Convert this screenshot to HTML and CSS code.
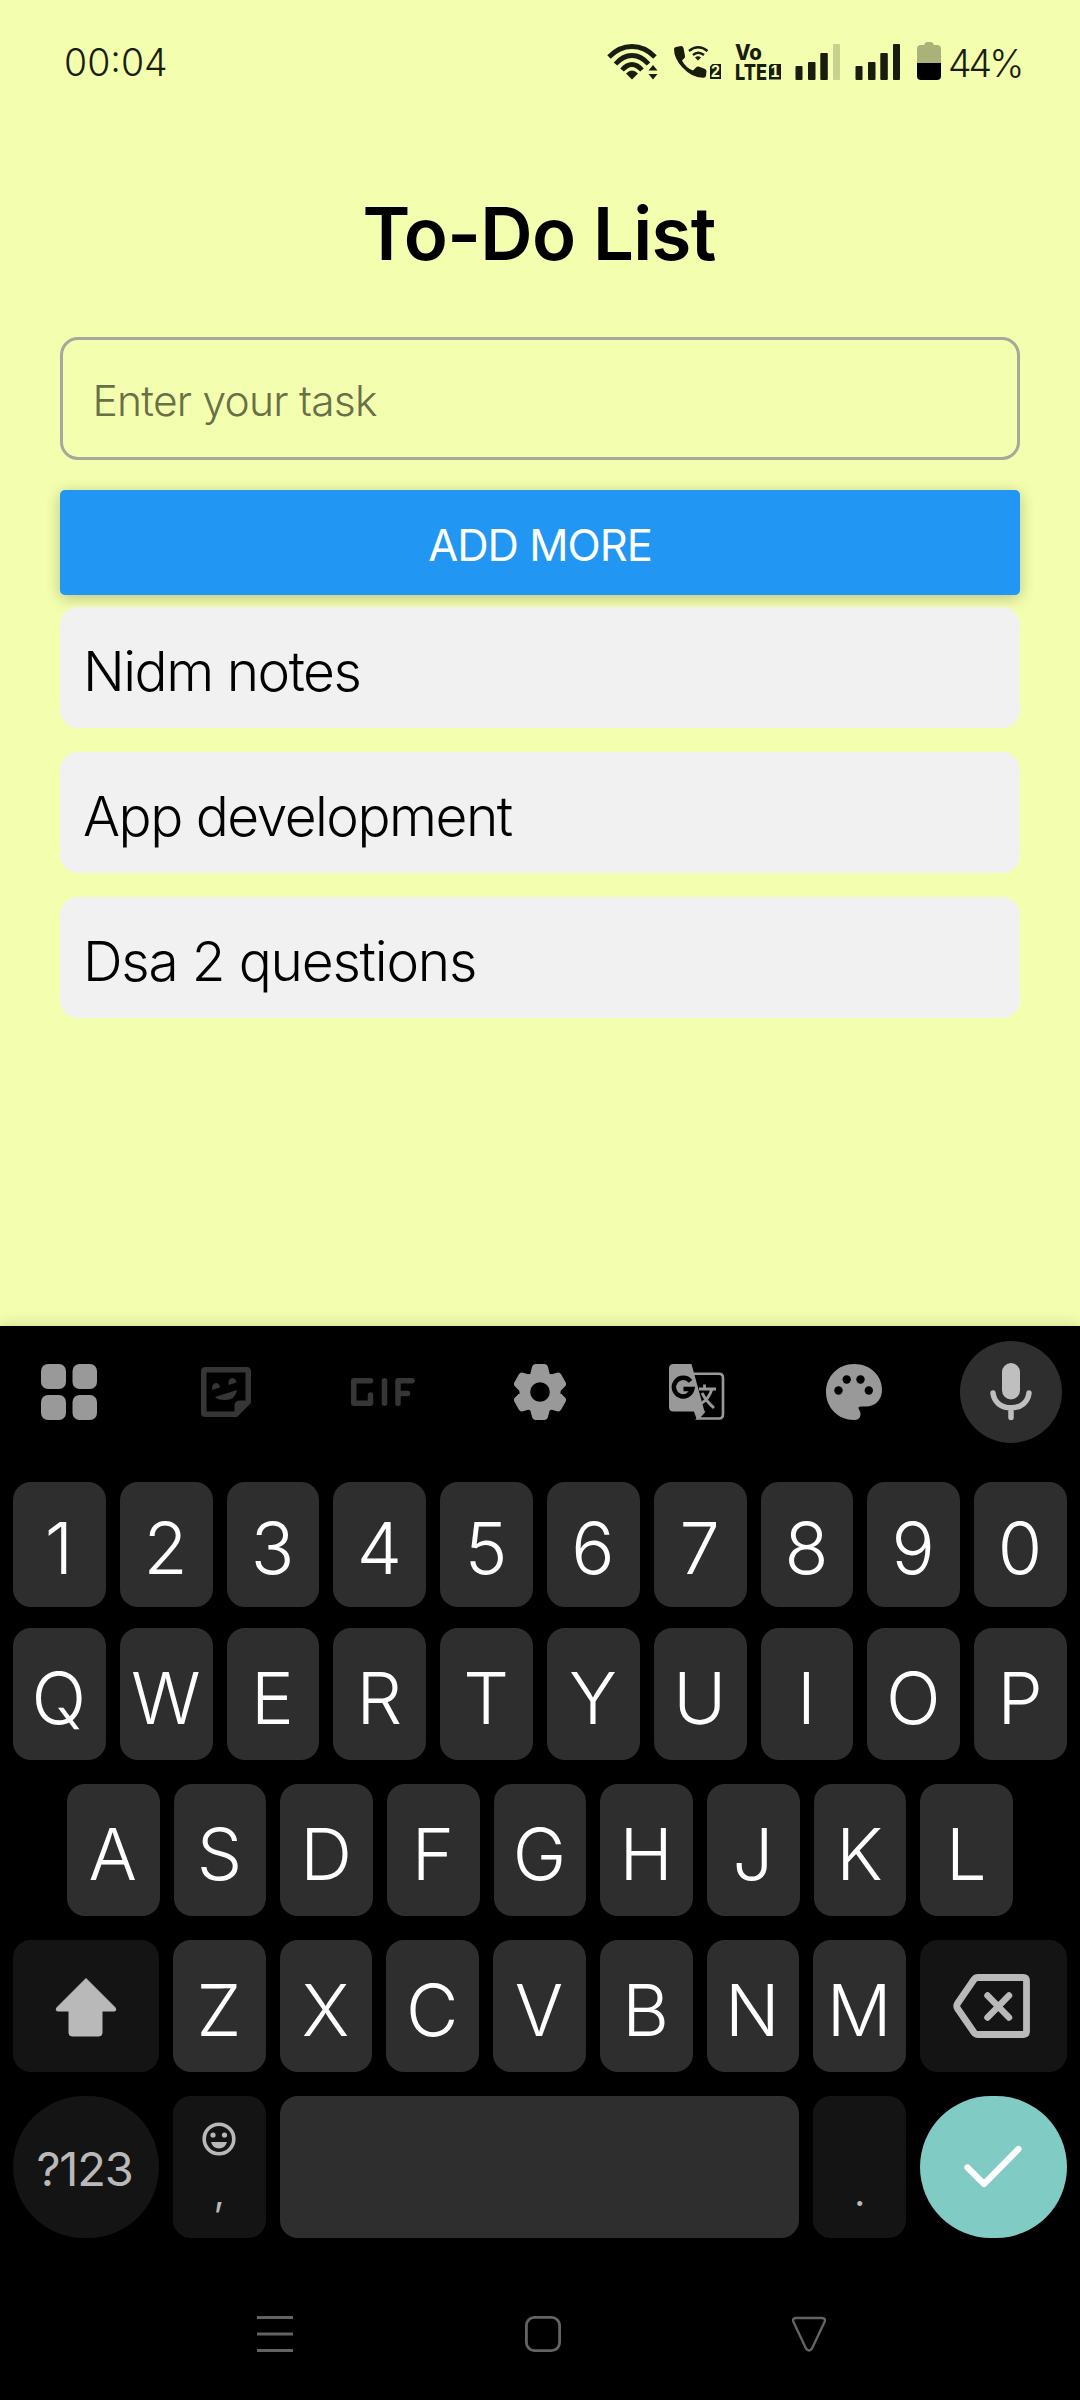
FILE: index.html
```html
<!DOCTYPE html>
<html lang="en">
<head>
<meta charset="utf-8">
<title>To-Do List</title>
<link rel="stylesheet" href="styles.css">
</head>
<body>
<div class="phone">
  <header class="status">
    <span class="clock">00:04</span>
    <div class="status-icons">
      <svg class="wifi" width="53" height="44" viewBox="606 40 53 44" fill="none" stroke="#191d0f" stroke-width="5">
        <path d="M609 57Q619 46.500 632 46.500T655 57M615.500 64Q623 55.500 632 55.500T648.500 64M622 70Q627 64.500 632 64.500T642 70" stroke-width="4.800"/>
        <path d="M626 73.500Q632 67.500 638 73.500L632 79.500ZM648.500 70.500L653 65L657.500 70.500ZM648.500 74H657.500L653 79.500Z" fill="#191d0f" stroke="none"/>
      </svg>
      <svg class="call" width="50" height="44" viewBox="673 40 50 44">
        <path d="M674 49q0-1.500 2-2l5-1q2 0 2.500 2l1.500 8q.3 1.500-1 2.500l-2 2q4 7.500 11 10l3-3q1.200-1.200 3-.8l5.500 2q2 .8 2 2.500l-.5 4.500q-.3 2-2.500 2Q692 78 682 67Q674 58 674 49Z" fill="#191d0f"/>
        <path d="M689 51Q698 43.500 707.500 51M693 55Q698 50.500 704 55" fill="none" stroke="#191d0f" stroke-width="2.400"/>
        <path d="M695 57.500Q698 55 701 57.500L698 60.500Z" fill="#191d0f"/>
        <path d="M712.500 64H721V79H710V66.500Z" fill="#191d0f"/>
        <text class="sim" x="715.500" y="77">2</text>
      </svg>
      <svg class="volte" width="48" height="44" viewBox="734 40 48 44">
        <text class="vo" x="735" y="59.500" textLength="27" lengthAdjust="spacingAndGlyphs">Vo</text>
        <text class="vo" x="735" y="79.500" textLength="32" lengthAdjust="spacingAndGlyphs">LTE</text>
        <path d="M771 64H781V79.500H769V66Z" fill="#191d0f"/>
        <text class="sim" x="775" y="77">1</text>
      </svg>
      <svg class="bars" width="46" height="44" viewBox="795 40 46 44" fill="#191d0f">
        <rect x="795.500" y="66" width="7" height="14" rx="1"/><rect x="808" y="62" width="7.500" height="18" rx="1"/><rect x="820.300" y="53" width="7.500" height="27" rx="1"/><rect x="833" y="44" width="7" height="36" rx="1" fill="#c8d18e"/>
      </svg>
      <svg class="bars2" width="46" height="44" viewBox="855 40 46 44" fill="#191d0f">
        <rect x="855.500" y="66" width="7" height="14" rx="1"/><rect x="868" y="62" width="7.500" height="18" rx="1"/><rect x="880.300" y="53" width="7.500" height="27" rx="1"/><rect x="893" y="44" width="7" height="36" rx="1"/>
      </svg>
      <svg class="battery" width="24" height="44" viewBox="917 40 24 44">
        <path d="M917 63V49Q917 45 921 45H924Q925 42 927 42H931Q933 42 934 45H937Q941 45 941 49V63Z" fill="#aab278"/>
        <path d="M917 63H941V76Q941 80 937 80H921Q917 80 917 76Z"/>
      </svg>
      <span class="percent">44%</span>
    </div>
  </header>

  <main class="app">
    <h1 class="title">To-Do List</h1>
    <div class="field">Enter your task</div>
    <div class="add">ADD MORE</div>
    <ul class="tasks">
      <li>Nidm notes</li>
      <li>App development</li>
      <li class="loose">Dsa 2 questions</li>
    </ul>
  </main>

  <section class="keyboard">
    <div class="tools">
      <svg width="56" height="56" viewBox="0 0 56 56" fill="#999"><rect width="25" height="25" rx="7"/><rect x="31.500" width="24.500" height="25" rx="7"/><rect y="31" width="25" height="25" rx="7"/><rect x="31.500" y="31" width="24.500" height="25" rx="7"/></svg>
      <svg width="50" height="50" viewBox="0 0 50 50" fill="#363636"><path d="M4.500 0H45.500Q50 0 50 4.500V36L36 50H4.500Q0 50 0 45.500V4.500Q0 0 4.500 0ZM5.500 5.500V44.500H33.500V39Q33.500 33.500 39 33.500H44.500V5.500Z" fill-rule="evenodd"/><path d="M11 23Q10.500 16 15.500 16Q18.500 16.500 19 20.500ZM27.500 18Q27 11 31.500 11Q35 11.500 35.500 15.500ZM14 30L36 23Q34.500 33 24 33Q16.500 33 14 30Z"/></svg>
      <svg width="64" height="28" viewBox="0 0 64 28" fill="none" stroke="#363636" stroke-width="5.500" stroke-linecap="round" stroke-linejoin="round"><path d="M19.500 2.800H2.800V25.200H19.500V17M33.500 2.800V25.200M47 25.200V2.800H61M47 15.500H56.500"/></svg>
      <svg width="52" height="56" viewBox="0 0 52 56"><path fill="#999" stroke="#999" stroke-width="7" stroke-linejoin="round" d="M21.500 3.500H30.500L32.500 11.500L37 14L44 12L48.500 20L43 25.500V30.500L48.500 36L44 44L37 42L32.500 44.500L30.500 52.500H21.500L19.500 44.500L15 42L8 44L3.500 36L9 30.500V25.500L3.500 20L8 12L15 14L19.500 11.500Z"/><circle cx="26" cy="28" r="9.800" fill="#000"/></svg>
      <svg width="56" height="56" viewBox="0 0 56 56"><path d="M25 9.800H50Q54 9.800 54 13.800V50Q54 54.500 50 54.500H29L35.500 47" fill="none" stroke="#999" stroke-width="2.600"/><path d="M4.500 0H22.500L35.500 47.500L28 56L25 47.500H4.500Q0 47.500 0 43V4.500Q0 0 4.500 0Z" fill="#999"/><path d="M21.500 17.300A9.300 9.300 0 1 0 23.300 25H14.500" fill="none" stroke="#000" stroke-width="4.500"/><path d="M30 25H47M35.500 20.500V25M43 25Q40 35 31.500 40M33 29Q37 37 45 44" fill="none" stroke="#999" stroke-width="2.800"/></svg>
      <svg width="56" height="56" viewBox="0 0 56 56"><path d="M28 0C44 0 56 11 56 26C56 36 49 42.500 40 42.500H34.500Q32 42.500 32.500 44.500Q35 49 34.500 51Q34 56 28 56C12 56 0 43.500 0 28S12 0 28 0Z" fill="#999"/><g fill="#000"><circle cx="12.500" cy="26.500" r="4.200"/><circle cx="20.700" cy="15.500" r="4.200"/><circle cx="34.500" cy="15.500" r="4.200"/><circle cx="42.800" cy="26.500" r="4.200"/></g></svg>
      <div class="mic"><svg width="42" height="58" viewBox="0 0 42 58"><rect x="12" width="18" height="36.500" rx="9" fill="#bfbfbf"/><path d="M3 30C4 39 11 44.800 21 44.800S38 39 39 30M21 45V54.500" fill="none" stroke="#bfbfbf" stroke-width="5.500" stroke-linecap="round"/></svg></div>
    </div>
    <div class="row digits"><b>1</b><b>2</b><b>3</b><b>4</b><b>5</b><b>6</b><b>7</b><b>8</b><b>9</b><b>0</b></div>
    <div class="row"><b>Q</b><b>W</b><b>E</b><b>R</b><b>T</b><b>Y</b><b>U</b><b>I</b><b>O</b><b>P</b></div>
    <div class="row inset"><b>A</b><b>S</b><b>D</b><b>F</b><b>G</b><b>H</b><b>J</b><b>K</b><b>L</b></div>
    <div class="row">
      <div class="fn"><svg width="64" height="61" viewBox="0 0 64 61"><path d="M32 2.500L61 31.500Q63 35 60 35H48V57Q48 60 45 60H18Q15 60 15 57V35H4Q1 35 3 31.500Z" fill="#b9b9b9" stroke="#b9b9b9" stroke-linejoin="round"/></svg></div>
      <b>Z</b><b>X</b><b>C</b><b>V</b><b>B</b><b>N</b><b>M</b>
      <div class="fn back"><svg width="77" height="64" viewBox="0 0 77 64" fill="none" stroke="#b9b9b9" stroke-linecap="round" stroke-linejoin="round"><path d="M25 3.500H70Q73.500 3.500 73.500 7V57Q73.500 60.500 70 60.500H25Q22.500 60.500 21 58.500L4.500 34.500Q3 32 4.500 29.500L21 5.500Q22.500 3.500 25 3.500Z" stroke-width="6.800"/><path d="M34.500 21.500L56 43.500M56 21.500L34.500 43.500" stroke-width="6.500"/></svg></div>
    </div>
    <div class="row bottom">
      <div class="fn round sym">?123</div>
      <div class="dark"><svg width="34" height="34" viewBox="0 0 34 34" fill="#b9b9b9"><circle cx="17" cy="17" r="14.800" fill="none" stroke="#b9b9b9" stroke-width="3.600"/><circle cx="11" cy="13" r="2.600"/><circle cx="22.500" cy="13" r="2.600"/><path d="M9 20H25Q23 26.500 17 26.500T9 20Z"/></svg><span>,</span></div>
      <div class="space"></div>
      <div class="dark"><span>.</span></div>
      <div class="fn back round enter"><svg width="60" height="44" viewBox="0 0 60 44" fill="none" stroke="#fff" stroke-width="6.200" stroke-linecap="round" stroke-linejoin="round"><path d="M4.500 22.500L21 39L55.500 4"/></svg></div>
    </div>
    <nav class="nav">
      <svg width="36" height="36" viewBox="0 0 36 36"><path d="M0 1.500H36M0 18H36M0 34.500H36" stroke="#636363" stroke-width="3"/></svg>
      <svg width="36" height="36" viewBox="0 0 36 36"><rect x="1.400" y="1.400" width="33.200" height="33.200" rx="8" fill="none" stroke="#636363" stroke-width="2.800"/></svg>
      <svg width="34" height="36" viewBox="0 0 34 36"><path d="M4 2H30Q34 2 32.500 6L20 32.500Q17 36.500 14 32.500L1.500 6Q0 2 4 2Z" fill="none" stroke="#636363" stroke-width="2.400"/></svg>
    </nav>
  </section>
</div>
</body>
</html>
```
FILE: styles.css
```css
* { box-sizing: border-box; }
body { margin: 0; background: #f3feae; font-family: Inter, "Liberation Sans", sans-serif; font-weight: 300; color: #000; }
svg { display: block; flex: none; }
.phone { width: 1080px; height: 2400px; display: flex; flex-direction: column; overflow: hidden; }

.status { height: 124px; padding: 40px 57px 0 64px; display: flex; justify-content: space-between; align-items: flex-start; }
.clock, .percent { font-size: 37.500px; line-height: 44px; color: #191d0f; white-space: nowrap; }
.clock { padding-top: 1px; }
.percent { padding-top: 2px; margin-left: 7px; width: 75px; letter-spacing: -3px; }
.status-icons { display: flex; }
.call { margin-left: 14px; }
.volte { margin-left: 11px; }
.bars { margin-left: 13px; }
.bars2 { margin-left: 14px; }
.battery { margin-left: 16px; }
.sim { font: 700 16px "Liberation Sans", sans-serif; text-anchor: middle; fill: #f3feae; }
.vo { font: 800 21.500px Inter, sans-serif; fill: #191d0f; }

.app { height: 1202px; padding: 0 60px; display: flex; flex-direction: column; }
.title { margin: 60px 2px 53px 0; font-size: 72.500px; line-height: 100px; font-weight: 600; text-align: center; letter-spacing: -.700px; }
.field { height: 123px; padding: 5px 34px 0 29.500px; border: 3px solid #a7a89b; border-radius: 18px; font-size: 42.500px; line-height: 112px; color: #687047; letter-spacing: -.75px; }
.add { margin-top: 30px; height: 105px; padding-top: 5px; border-radius: 5px; background: #2196f3; color: #fff; font-size: 43.500px; line-height: 100px; font-weight: 400; text-align: center; letter-spacing: -1px; box-shadow: 0 3px 15px rgba(0,0,0,.24); }
.tasks { list-style: none; margin: 12px 0 0; padding: 0; display: flex; flex-direction: column; gap: 24.500px; }
.tasks li { height: 120.500px; padding: 8px 23px 0; border-radius: 18px; background: #f1f1f1; font-size: 55px; line-height: 112px; letter-spacing: -1.500px; }
.tasks .loose { letter-spacing: -1.200px; }

.keyboard { height: 1074px; background: #000; padding: 15px 13px 0; box-shadow: 0 0 16px rgba(0,0,0,.16); }
.tools { height: 102px; width: 1099px; margin: 0 0 39px -23px; display: grid; grid-template-columns: repeat(7, 157px); place-items: center; }
.mic { width: 102px; height: 102px; border-radius: 50%; background: #2e2e2e; display: flex; justify-content: center; align-items: center; }
.row { display: flex; gap: 14px; height: 132px; margin-top: 24px; }
.row b { flex: 1; padding: 8px 1px 0 0; border-radius: 18px; background: #2e2e2e; color: #fff; font-size: 72px; line-height: 124px; font-weight: 300; text-align: center; }
.digits { height: 125px; margin-top: 0; }
.digits b { padding-top: 7px; line-height: 118px; }
.digits + .row { margin-top: 21px; }
.inset { padding: 0 54px; }
.fn { flex: none; width: 146px; border-radius: 18px; background: #141414; color: #b9b9b9; display: flex; justify-content: center; align-items: center; }
.back { width: 147px; }
.back svg { margin-right: 4px; }
.bottom { height: 142px; }
.round { border-radius: 71px; }
.sym { font-size: 47px; font-weight: 400; padding: 3px 3px 0 0; letter-spacing: -1.200px; }
.dark { flex: none; width: 92.600px; border-radius: 18px; background: #141414; color: #b9b9b9; display: flex; flex-direction: column; align-items: center; padding: 26px 0 24px; font-size: 38px; line-height: 44px; font-weight: 400; }
.dark span { margin-top: auto; }
.space { flex: 1; border-radius: 18px; background: #2e2e2e; }
.enter { background: #80cbc4; }
.enter svg { margin-right: 1px; }
.nav { margin: 78px 241px 0 244px; display: flex; justify-content: space-between; align-items: center; }
```
